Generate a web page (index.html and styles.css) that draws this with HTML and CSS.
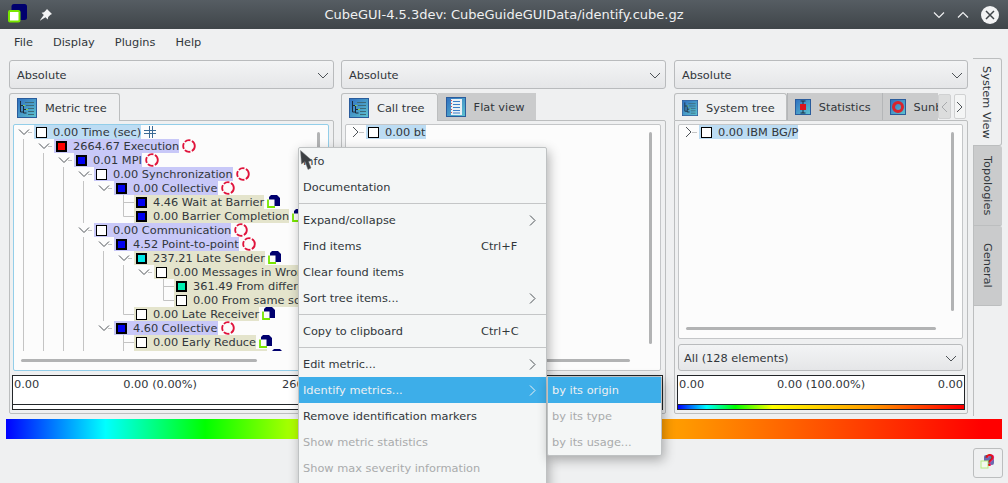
FILE: index.html
```html
<!DOCTYPE html>
<html lang="en">
<head>
    <meta charset="UTF-8">
    <title>CubeGUI-4.5.3dev: CubeGuideGUIData/identify.cube.gz</title>
    <link rel="stylesheet" href="styles.css">
</head>
<body>
<svg class="defs" width="0" height="0">
    <defs>
        <linearGradient id="iconbg" x1="0" y1="0" x2="1" y2="1">
            <stop offset="0" stop-color="#2f6fc0"/>
            <stop offset="1" stop-color="#5fc4d0"/>
        </linearGradient>
        <symbol id="chev-down" viewBox="0 0 16 14"><path d="M3 4.5l5 5 5-5" fill="none" stroke="#4d5257"/><path d="M12 7.5h4" stroke="#c4c4c4"/></symbol>
        <symbol id="chev-right" viewBox="0 0 16 14"><path d="M5 2l5 5-5 5" fill="none" stroke="#4d5257"/><path d="M11 7.5h5" stroke="#c4c4c4"/></symbol>
        <symbol id="ic-tree" viewBox="0 0 20 20">
            <rect x=".5" y=".5" width="19" height="19" fill="url(#iconbg)" stroke="#2a5c9c"/>
            <path d="M3.5 3v11h3M3.5 7.5h3M6.5 7v8h3M6.5 11.5h3" fill="none" stroke="#1c2a3c"/>
            <path d="M8 4.5h9M9 7.5h8M11 10.5h6M11 13.5h6M11 16.5h6" stroke="#3d6a78"/>
            <path d="M6 7.5h2M9 11.5h2" stroke="#7fd05a"/>
        </symbol>
        <symbol id="ic-flat" viewBox="0 0 20 20">
            <rect x=".5" y=".5" width="19" height="19" fill="url(#iconbg)" stroke="#2a5c9c"/>
            <rect x="5" y="2" width="11" height="16" fill="#e8f0f6"/>
            <path d="M7 4.5h7M7 7.5h7M7 10.5h7M7 13.5h7M7 16h7" stroke="#3d7fc8"/>
            <path d="M5.5 3v14" stroke="#e0505a" stroke-dasharray="1 2"/>
        </symbol>
        <symbol id="ic-stat" viewBox="0 0 16 16">
            <rect x=".5" y=".5" width="15" height="15" fill="url(#iconbg)" stroke="#2a5c9c"/>
            <path d="M8 2v12M5.5 2h5M5.5 14h5" stroke="#1c2a3c"/>
            <rect x="5" y="5" width="6" height="6" fill="#d8141c"/>
        </symbol>
        <symbol id="ic-sun" viewBox="0 0 16 16">
            <rect x=".5" y=".5" width="15" height="15" fill="url(#iconbg)" stroke="#2a5c9c"/>
            <circle cx="8" cy="8" r="4.5" fill="none" stroke="#d8242c" stroke-width="3"/>
        </symbol>
        <symbol id="mark-red" viewBox="0 0 13 13"><circle cx="6.5" cy="6.5" r="5.4" fill="none" stroke="#e0143c" stroke-width="1.7" stroke-dasharray="5.5 1.4"/></symbol>
        <symbol id="mark-cube" viewBox="0 0 14 14">
            <path d="M4 0h6l3 3v8H2V2z" fill="#00006e"/>
            <rect x="1" y="4.5" width="6.500" height="7" fill="#fcfcfc"/>
            <path d="M1 4.5V12h7" fill="none" stroke="#78e600" stroke-width="1.8"/>
        </symbol>
    </defs>
</svg>

<div class="window">
    <header class="titlebar">
        <div class="title-left">
            <svg class="app-icon" width="20" height="21" viewBox="0 0 20 21">
                <rect x="3.5" y="0" width="15.5" height="16" rx="2.5" fill="#00006e"/>
                <rect x="1" y="7" width="10.5" height="10.5" rx="1" fill="#fff" stroke="#78e600" stroke-width="2"/>
            </svg>
            <svg class="pin" width="12" height="12" viewBox="0 0 12 12"><path d="M7 0l5 5-1.500.8-2.300 2.300-.5 2.400-2.200-2.200L1 11 0 12l.5-1.500 3.300-4.500L1.600 3.800 4 3.300 6.200 1z" fill="#f2f3f4"/></svg>
        </div>
        <div class="title-text">CubeGUI-4.5.3dev: CubeGuideGUIData/identify.cube.gz</div>
        <div class="title-right">
            <svg width="12" height="8" viewBox="0 0 12 8"><path d="M1 1.5l5 5 5-5" fill="none" stroke="#eff0f1" stroke-width="1.2"/></svg>
            <svg width="12" height="8" viewBox="0 0 12 8"><path d="M1 6.5l5-5 5 5" fill="none" stroke="#eff0f1" stroke-width="1.2"/></svg>
            <svg width="18" height="18" viewBox="0 0 18 18"><circle cx="9" cy="9" r="9" fill="#f2f3f4"/><path d="M5 5l8 8M13 5l-8 8" stroke="#3f4549" stroke-width="1.5"/></svg>
        </div>
    </header>

    <nav class="menubar">
        <span>File</span>
        <span>Display</span>
        <span>Plugins</span>
        <span>Help</span>
    </nav>

    <main class="workspace">
        <section class="panel panel-wide">
            <div class="combo"><span>Absolute</span><svg width="12" height="7" viewBox="0 0 12 7"><path d="M1 1l5 5 5-5" fill="none" stroke="#4d5257"/></svg></div>
            <div class="tabbar">
                <div class="tab active"><svg class="tab-icon" width="20" height="20"><use href="#ic-tree"/></svg>Metric tree</div>
            </div>
            <div class="pane">
                <div class="tree focused">
                    <div class="tree-view">
                        <svg class="guides" width="315" height="226" viewBox="14 125 315 226">
                            <path d="M23.5 139v212M43.5 153v198M63.5 167v184M83.5 181v42M83.5 237v114M103.5 251v70M123.5 195v21.5M123.5 202.500h10.5M123.5 216.500h10.5M123.5 265v49.5M123.5 314.500h10.5M123.5 335v16M123.5 342.500h10.5M163.5 279v21.5M163.5 286.500h10.5M163.5 300.500h10.5" fill="none" stroke="#c4c4c4"/>
                        </svg>
                        <div class="row d0"><svg class="chev"><use href="#chev-down"/></svg><span class="label sel"><i class="cb"></i>0.00 Time (sec)</span><svg class="cross" width="12" height="14" viewBox="0 0 12 14"><path d="M5.5 1v12M8.5 1v12M0 5.5h12M0 8.5h12" stroke="#3b6a94"/></svg></div>
                        <div class="row d1"><svg class="chev"><use href="#chev-down"/></svg><span class="label lav"><i class="cb c-red"></i>2664.67 Execution</span><svg class="mark"><use href="#mark-red"/></svg></div>
                        <div class="row d2"><svg class="chev"><use href="#chev-down"/></svg><span class="label lav"><i class="cb c-blue"></i>0.01 MPI</span><svg class="mark"><use href="#mark-red"/></svg></div>
                        <div class="row d3"><svg class="chev"><use href="#chev-down"/></svg><span class="label lav"><i class="cb"></i>0.00 Synchronization</span><svg class="mark"><use href="#mark-red"/></svg></div>
                        <div class="row d4"><svg class="chev"><use href="#chev-down"/></svg><span class="label lav"><i class="cb c-blue"></i>0.00 Collective</span><svg class="mark"><use href="#mark-red"/></svg></div>
                        <div class="row d5"><span class="chev"></span><span class="label bei"><i class="cb c-blue"></i>4.46 Wait at Barrier</span><svg class="mark"><use href="#mark-cube"/></svg></div>
                        <div class="row d5"><span class="chev"></span><span class="label bei"><i class="cb c-blue"></i>0.00 Barrier Completion</span><svg class="mark"><use href="#mark-cube"/></svg></div>
                        <div class="row d3"><svg class="chev"><use href="#chev-down"/></svg><span class="label lav"><i class="cb"></i>0.00 Communication</span><svg class="mark"><use href="#mark-red"/></svg></div>
                        <div class="row d4"><svg class="chev"><use href="#chev-down"/></svg><span class="label lav"><i class="cb c-blue"></i>4.52 Point-to-point</span><svg class="mark"><use href="#mark-red"/></svg></div>
                        <div class="row d5"><svg class="chev"><use href="#chev-down"/></svg><span class="label bei"><i class="cb c-cyan"></i>237.21 Late Sender</span><svg class="mark"><use href="#mark-cube"/></svg></div>
                        <div class="row d6"><svg class="chev"><use href="#chev-down"/></svg><span class="label bei"><i class="cb"></i>0.00 Messages in Wrong Order</span></div>
                        <div class="row d7"><span class="chev"></span><span class="label bei"><i class="cb c-teal"></i>361.49 From different sources</span></div>
                        <div class="row d7"><span class="chev"></span><span class="label bei"><i class="cb"></i>0.00 From same source</span></div>
                        <div class="row d5"><span class="chev"></span><span class="label bei"><i class="cb"></i>0.00 Late Receiver</span><svg class="mark"><use href="#mark-cube"/></svg></div>
                        <div class="row d4"><svg class="chev"><use href="#chev-down"/></svg><span class="label lav"><i class="cb c-blue"></i>4.60 Collective</span><svg class="mark"><use href="#mark-red"/></svg></div>
                        <div class="row d5"><span class="chev"></span><span class="label bei"><i class="cb"></i>0.00 Early Reduce</span><svg class="mark"><use href="#mark-cube"/></svg></div>
                        <div class="row d5"><span class="chev"></span><span class="label bei"><i class="cb"></i>0.00 Late Broadcast</span><svg class="mark"><use href="#mark-cube"/></svg></div>
                        <div class="vscroll left-scroll"></div>
                    </div>
                    <div class="hscroll"><div class="thumb thumb-left"></div></div>
                </div>
                <div class="valuebar">
                    <div class="values values-left"><span>0.00</span><span>0.00 (0.00%)</span><span>2664.67</span></div>
                    <div class="strip"></div>
                </div>
            </div>
        </section>

        <section class="panel panel-wide mid">
            <div class="combo"><span>Absolute</span><svg width="12" height="7" viewBox="0 0 12 7"><path d="M1 1l5 5 5-5" fill="none" stroke="#4d5257"/></svg></div>
            <div class="tabbar">
                <div class="tab active"><svg class="tab-icon" width="20" height="20"><use href="#ic-tree"/></svg>Call tree</div>
                <div class="tab"><svg class="tab-icon" width="20" height="20"><use href="#ic-flat"/></svg>Flat view</div>
            </div>
            <div class="pane">
                <div class="tree">
                    <div class="tree-view">
                        <div class="row d0"><svg class="chev"><use href="#chev-right"/></svg><span class="label sel"><i class="cb"></i>0.00 bt</span></div>
                        <div class="vscroll mid-scroll"></div>
                    </div>
                    <div class="hscroll"><div class="thumb thumb-mid"></div></div>
                </div>
                <div class="valuebar">
                    <div class="values"><span>0.00</span><span>0.00 (100.00%)</span><span>0.00</span></div>
                    <div class="strip spectrum"></div>
                </div>
            </div>
        </section>

        <section class="panel panel-narrow">
            <div class="combo"><span>Absolute</span><svg width="12" height="7" viewBox="0 0 12 7"><path d="M1 1l5 5 5-5" fill="none" stroke="#4d5257"/></svg></div>
            <div class="tabbar">
                <div class="tabs-clip">
                    <div class="tab tab-small active"><svg class="tab-icon" width="16" height="16"><use href="#ic-tree"/></svg>System tree</div>
                    <div class="tab tab-small"><svg class="tab-icon" width="16" height="16"><use href="#ic-stat"/></svg>Statistics</div>
                    <div class="tab tab-small"><svg class="tab-icon" width="16" height="16"><use href="#ic-sun"/></svg>Sunburst</div>
                </div>
                <div class="tab-scroll off"><svg width="7" height="12" viewBox="0 0 7 12"><path d="M6 1L1 6l5 5" fill="none" stroke="#a8aaac"/></svg></div>
                <div class="tab-scroll"><svg width="7" height="12" viewBox="0 0 7 12"><path d="M1 1l5 5-5 5" fill="none" stroke="#4d5257"/></svg></div>
            </div>
            <div class="pane">
                <div class="tree">
                    <div class="tree-view">
                        <div class="row d0"><svg class="chev"><use href="#chev-right"/></svg><span class="label sel"><i class="cb"></i>0.00 IBM BG/P</span></div>
                        <div class="vscroll right-scroll"></div>
                    </div>
                    <div class="hscroll"><div class="thumb thumb-right"></div></div>
                </div>
                <div class="combo combo-inner"><span>All (128 elements)</span><svg width="12" height="7" viewBox="0 0 12 7"><path d="M1 1l5 5 5-5" fill="none" stroke="#4d5257"/></svg></div>
                <div class="valuebar">
                    <div class="values"><span>0.00</span><span>0.00 (100.00%)</span><span>0.00</span></div>
                    <div class="strip spectrum"></div>
                </div>
            </div>
        </section>

        <aside class="sidetabs">
            <div class="sidetab active"><span>System View</span></div>
            <div class="sidetab"><span>Topologies</span></div>
            <div class="sidetab"><span>General</span></div>
        </aside>
    </main>

    <div class="colorbar"></div>

    <footer class="bottom">
        <button class="help-btn">
            <svg width="16" height="16" viewBox="0 0 16 16"><rect x="4" y="0" width="10" height="10" rx="2" fill="#6a6ab0"/><rect x="1" y="6" width="7" height="7" fill="#f4f8ee" stroke="#b4ec80"/></svg>
            <b>?</b>
        </button>
    </footer>

    <div class="menu context">
        <div class="item">Info</div>
        <div class="item">Documentation</div>
        <div class="sep"></div>
        <div class="item">Expand/collapse<svg class="arrow" width="7" height="11" viewBox="0 0 7 11"><path d="M1 .5l5 5-5 5" fill="none" stroke="#4d5257"/></svg></div>
        <div class="item">Find items<span class="key">Ctrl+F</span></div>
        <div class="item">Clear found items</div>
        <div class="item">Sort tree items...<svg class="arrow" width="7" height="11" viewBox="0 0 7 11"><path d="M1 .5l5 5-5 5" fill="none" stroke="#4d5257"/></svg></div>
        <div class="sep"></div>
        <div class="item">Copy to clipboard<span class="key">Ctrl+C</span></div>
        <div class="sep"></div>
        <div class="item">Edit metric...<svg class="arrow" width="7" height="11" viewBox="0 0 7 11"><path d="M1 .5l5 5-5 5" fill="none" stroke="#4d5257"/></svg></div>
        <div class="item hot">Identify metrics...<svg class="arrow" width="7" height="11" viewBox="0 0 7 11"><path d="M1 .5l5 5-5 5" fill="none" stroke="#eff0f1"/></svg></div>
        <div class="item">Remove identification markers</div>
        <div class="item off">Show metric statistics</div>
        <div class="item off">Show max severity information</div>
    </div>

    <div class="menu submenu">
        <div class="item hot">by its origin</div>
        <div class="item off">by its type</div>
        <div class="item off">by its usage...</div>
    </div>

    <svg class="cursor" width="14" height="22" viewBox="0 0 14 22"><path d="M.5.5L1.5 14 5 11.5l3 8 3-1.5-2.500-6.500 3.500-1z" fill="#3c3f42" stroke="#77797b" stroke-width=".5"/></svg>
</div>
</body>
</html>
```

FILE: styles.css
```css
* {
    box-sizing: border-box;
}
html, body {
    margin: 0;
    padding: 0;
    overflow: hidden;
}
body {
    font-family: "DejaVu Sans", sans-serif;
    font-size: 11.35px;
    color: #31363b;
    background-color: #eff0f1;
}
.defs {
    position: absolute;
}
.window {
    position: relative;
    width: 1008px;
    height: 483px;
    overflow: hidden;
    display: flex;
    flex-direction: column;
}

/* title bar */
.titlebar {
    height: 29px;
    flex: none;
    display: flex;
    align-items: center;
    background: linear-gradient(#565d63, #3f4549);
    color: #eff0f1;
    font-size: 13px;
}
.title-left {
    width: 310px;
    display: flex;
    align-items: center;
    gap: 12px;
    padding-left: 8px;
}
.title-text {
    flex: 1;
    text-align: center;
    white-space: nowrap;
}
.title-right {
    width: 310px;
    display: flex;
    align-items: center;
    justify-content: flex-end;
    gap: 12px;
    padding-right: 9px;
}
.menubar {
    height: 27px;
    flex: none;
    display: flex;
    align-items: center;
    gap: 20px;
    padding: 0 0 2px 14px;
}

/* panels */
.workspace {
    height: 363px;
    flex: none;
    display: flex;
    padding: 2px 0 0 9px;
}
.panel {
    display: flex;
    flex-direction: column;
    height: 354px;
    margin-top: 2px;
}
.panel-wide {
    width: 325px;
    margin-right: 7px;
}
.mid {
    margin-right: 8px;
}
.panel-narrow {
    width: 294px;
}
.combo {
    height: 29px;
    flex: none;
    display: flex;
    align-items: center;
    justify-content: space-between;
    padding: 1px 4px 0 7px;
    border: 1px solid #b9bbbd;
    border-radius: 3px;
    background: linear-gradient(#f3f4f5, #e5e6e8);
}
.combo-inner {
    height: 27px;
    margin-top: 5px;
    padding: 1px 5px 0 5px;
}
.tabbar {
    height: 27px;
    margin-top: 4px;
    flex: none;
    display: flex;
    position: relative;
    z-index: 1;
}
.tabs-clip {
    width: 264px;
    display: flex;
    overflow: hidden;
    flex: none;
}
.tab {
    height: 27px;
    flex: none;
    display: flex;
    align-items: center;
    padding: 0 12px 0 8px;
    background-color: #cacbcc;
    white-space: nowrap;
}
.tab.active {
    height: 28px;
    padding-left: 7px;
    background-color: #eff0f1;
    border: 1px solid #bcbebf;
    border-bottom: none;
    border-radius: 3px 3px 0 0;
}
.tab-icon {
    margin-right: 8px;
    flex: none;
}
.tab-small {
    padding-right: 11px;
}
.tab-small.active {
    padding-right: 11px;
}
.tab-small + .tab-small {
    padding-left: 7px;
    border-left: 1px solid #b4b6b8;
}
.tab-scroll {
    width: 13px;
    height: 25px;
    margin: 1px 2px 0 0;
    display: flex;
    align-items: center;
    justify-content: center;
    background-color: #f4f5f5;
    border: 1px solid #d0d1d2;
    border-radius: 2px;
}
.tab-scroll.off {
    background-color: #dcdddd;
    margin-right: 3px;
}
.pane {
    flex: 1;
    min-height: 0;
    display: flex;
    flex-direction: column;
    padding: 3px 4px 3px 3px;
    border: 1px solid #bcbebf;
    border-radius: 0 2px 2px 2px;
}

/* trees */
.tree {
    flex: 1;
    min-height: 0;
    display: flex;
    flex-direction: column;
    background-color: #fcfcfc;
    border: 1px solid #c4c6c8;
    border-radius: 2px;
}
.tree.focused {
    border-color: #93cee9;
}
.tree-view {
    flex: 1;
    min-height: 0;
    position: relative;
    overflow: hidden;
}
.hscroll {
    height: 19px;
    flex: none;
    padding-top: 8px;
}
.thumb {
    height: 3px;
    background-color: #b2b3b4;
    border-radius: 2px;
}
.thumb-left {
    margin: 0 71px 0 7px;
}
.thumb-mid {
    margin: 0 30px 0 7px;
}
.thumb-right {
    margin: 0 26px 0 7px;
}
.vscroll {
    position: absolute;
    top: 7px;
    width: 3px;
    background-color: #b2b3b4;
    border-radius: 2px;
}
.left-scroll {
    right: 8px;
    height: 40px;
}
.mid-scroll {
    right: 8px;
    height: 212px;
}
.right-scroll {
    right: 8px;
    height: 179px;
}
.guides {
    position: absolute;
    left: 0;
    top: 0;
}
.row {
    height: 14px;
    display: flex;
    align-items: center;
    position: relative;
    white-space: nowrap;
}
.d0 { padding-left: 2px; }
.d1 { padding-left: 22px; }
.d2 { padding-left: 42px; }
.d3 { padding-left: 62px; }
.d4 { padding-left: 82px; }
.d5 { padding-left: 102px; }
.d6 { padding-left: 122px; }
.d7 { padding-left: 142px; }
.chev {
    width: 16px;
    height: 14px;
    margin-right: 2px;
    flex: none;
}
.label {
    height: 14px;
    display: flex;
    align-items: center;
    padding-left: 2px;
}
.sel { background-color: #bcdcf3; }
.lav { background-color: #c8c8f8; }
.bei { background-color: #e4e4cc; }
.cb {
    width: 11px;
    height: 11px;
    margin-right: 6px;
    flex: none;
    background-color: #fff;
    border: 1px solid #000;
}
.c-red { background-color: #ff0000; box-shadow: inset 0 0 0 1px #000; }
.c-blue { background-color: #0000f0; box-shadow: inset 0 0 0 1px #000; }
.c-cyan { background-color: #00e8e8; box-shadow: inset 0 0 0 1px #000; }
.c-teal { background-color: #00eeb0; box-shadow: inset 0 0 0 1px #000; }
.mark {
    width: 14px;
    height: 14px;
    margin-left: 3px;
    flex: none;
}
.cross {
    margin-left: 3px;
}

/* value bars */
.valuebar {
    height: 35px;
    flex: none;
    margin: 4px -2px 0 -1px;
    background-color: #fff;
    border: 1px solid #232629;
}
.values {
    height: 28px;
    display: flex;
    justify-content: space-between;
    padding: 1px 1px 0;
    line-height: 14px;
}
.values-left {
    justify-content: flex-start;
}
.values-left span:nth-child(2) {
    margin-left: 84px;
}
.values-left span:nth-child(3) {
    margin-left: auto;
}
.strip {
    height: 5px;
    border-top: 1px solid #232629;
}
.spectrum {
    background: linear-gradient(to right, #0000ff, #00ffff 10%, #00ff00 20%, #ffff00 33%, #ff9900 68%, #ff0000 98%);
    background-size: 100% 4px;
    background-repeat: no-repeat;
}

/* vertical tabs */
.sidetabs {
    width: 30px;
    margin-left: 5px;
    display: flex;
    flex-direction: column;
    border-left: 1px solid #bcbebf;
    height: 358px;
}
.sidetab {
    height: 80px;
    width: 29px;
    margin-left: -1px;
    display: flex;
    align-items: center;
    justify-content: center;
    background-color: #cacbcc;
    border-left: 1px solid #bcbebf;
    border-bottom: 1px solid #bcbebf;
    border-radius: 0 2px 2px 0;
}
.sidetab.active {
    height: 88px;
    background-color: #eff0f1;
    border: 1px solid #bcbebf;
    border-left: none;
    border-radius: 0 3px 3px 0;
}
.sidetab span {
    writing-mode: vertical-rl;
    white-space: nowrap;
}

/* colour legend */
.colorbar {
    height: 20px;
    flex: none;
    margin: 0 6px;
    background: linear-gradient(to right, #0000ff, #00ffff 10%, #00ff00 20%, #ffff00 33%, #ff9900 68%, #ff0000 98%);
}
.bottom {
    flex: none;
    display: flex;
    justify-content: flex-end;
    padding: 9px 5px 0 0;
}
.help-btn {
    width: 30px;
    height: 30px;
    padding: 0;
    position: relative;
    background-color: #eff0f1;
    border: 1px solid #bcbebf;
    border-radius: 3px;
    display: flex;
    align-items: center;
    justify-content: center;
}
.help-btn b {
    position: absolute;
    left: 11px;
    top: 3px;
    color: #e8101c;
    font: bold 16px "Liberation Sans", sans-serif;
}

/* popup menus */
.menu {
    position: absolute;
    background-color: #f4f6f6;
    border: 1px solid #bfc2c3;
    border-radius: 2px;
    box-shadow: 2px 4px 12px rgba(0, 0, 0, 0.3);
    z-index: 10;
}
.context {
    left: 298px;
    top: 147px;
    width: 249px;
    height: 345px;
}
.submenu {
    left: 547px;
    top: 376px;
    width: 115px;
}
.item {
    height: 26px;
    display: flex;
    align-items: center;
    padding-left: 4px;
    position: relative;
    white-space: nowrap;
}
.hot {
    background-color: #3daee9;
    color: #eff0f1;
}
.off {
    color: #a9abac;
}
.sep {
    height: 4px;
    margin-top: 3px;
    border-top: 1px solid #c4c6c7;
}
.key {
    position: absolute;
    left: 182px;
}
.arrow {
    position: absolute;
    left: 230px;
}
.cursor {
    position: absolute;
    left: 300px;
    top: 150px;
    z-index: 20;
}
```
